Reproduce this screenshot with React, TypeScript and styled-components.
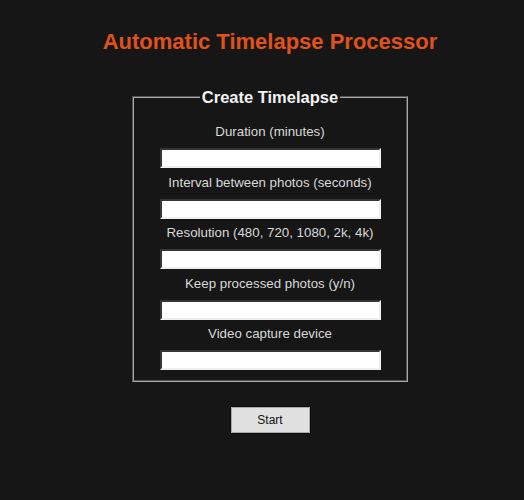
import React from "react";
import styled, { createGlobalStyle } from "styled-components";

const Global = createGlobalStyle`
  html, body { margin: 0; padding: 0; background: #161616; }
  body { font-family: "Liberation Sans", Arial, sans-serif; }
`;

const Page = styled.div`
  width: 524px;
  height: 500px;
  box-sizing: border-box;
  padding: 28px 0 0 16px;
  display: flex;
  flex-direction: column;
  align-items: center;
`;

const Title = styled.h1`
  margin: 0;
  font-size: 22px;
  line-height: 28px;
  font-weight: bold;
  color: #e0521b;
`;

const Box = styled.fieldset`
  margin: 32px 0 0 0;
  width: 276px;
  box-sizing: border-box;
  border: 2px groove #a8a8a8;
  padding: 10px 25px 10px;
  display: flex;
  flex-direction: column;
  align-items: center;
`;

const Legend = styled.legend`
  margin: 0 auto;
  padding: 0 2px;
  font-size: 16.5px;
  line-height: 18px;
  font-weight: bold;
  color: #f2f2f2;
`;

const Row = styled.div<{ $first?: boolean }>`
  display: flex;
  flex-direction: column;
  align-items: center;
  margin-top: ${(p) => (p.$first ? "8px" : "6.5px")};
  width: 100%;
`;

const Label = styled.label`
  font-size: 13.3px;
  line-height: 16px;
  color: #d9d9d9;
  margin-bottom: 8px;
`;

const Field = styled.input`
  width: 221px;
  height: 20px;
  box-sizing: border-box;
  background: #ffffff;
  border: 2px inset #8a8a8a;
  border-right-color: #f0f0f0;
  border-bottom-color: #f0f0f0;
  padding: 0 2px;
  margin: 0;
`;

const Button = styled.button`
  margin-top: 25px;
  width: 79px;
  height: 26px;
  box-sizing: border-box;
  background: #e1e1e1;
  border: 1px solid #adadad;
  outline: 1px solid #0b0b0b;
  font-family: "Liberation Sans", Arial, sans-serif;
  font-size: 12px;
  color: #111;
  padding: 0;
`;

const fields = [
  "Duration (minutes)",
  "Interval between photos (seconds)",
  "Resolution (480, 720, 1080, 2k, 4k)",
  "Keep processed photos (y/n)",
  "Video capture device",
];

export default function App() {
  return (
    <>
      <Global />
      <Page>
        <Title>Automatic Timelapse Processor</Title>
        <Box>
          <Legend>Create Timelapse</Legend>
          {fields.map((f, i) => (
            <Row key={f} $first={i === 0}>
              <Label>{f}</Label>
              <Field type="text" />
            </Row>
          ))}
        </Box>
        <Button>Start</Button>
      </Page>
    </>
  );
}
